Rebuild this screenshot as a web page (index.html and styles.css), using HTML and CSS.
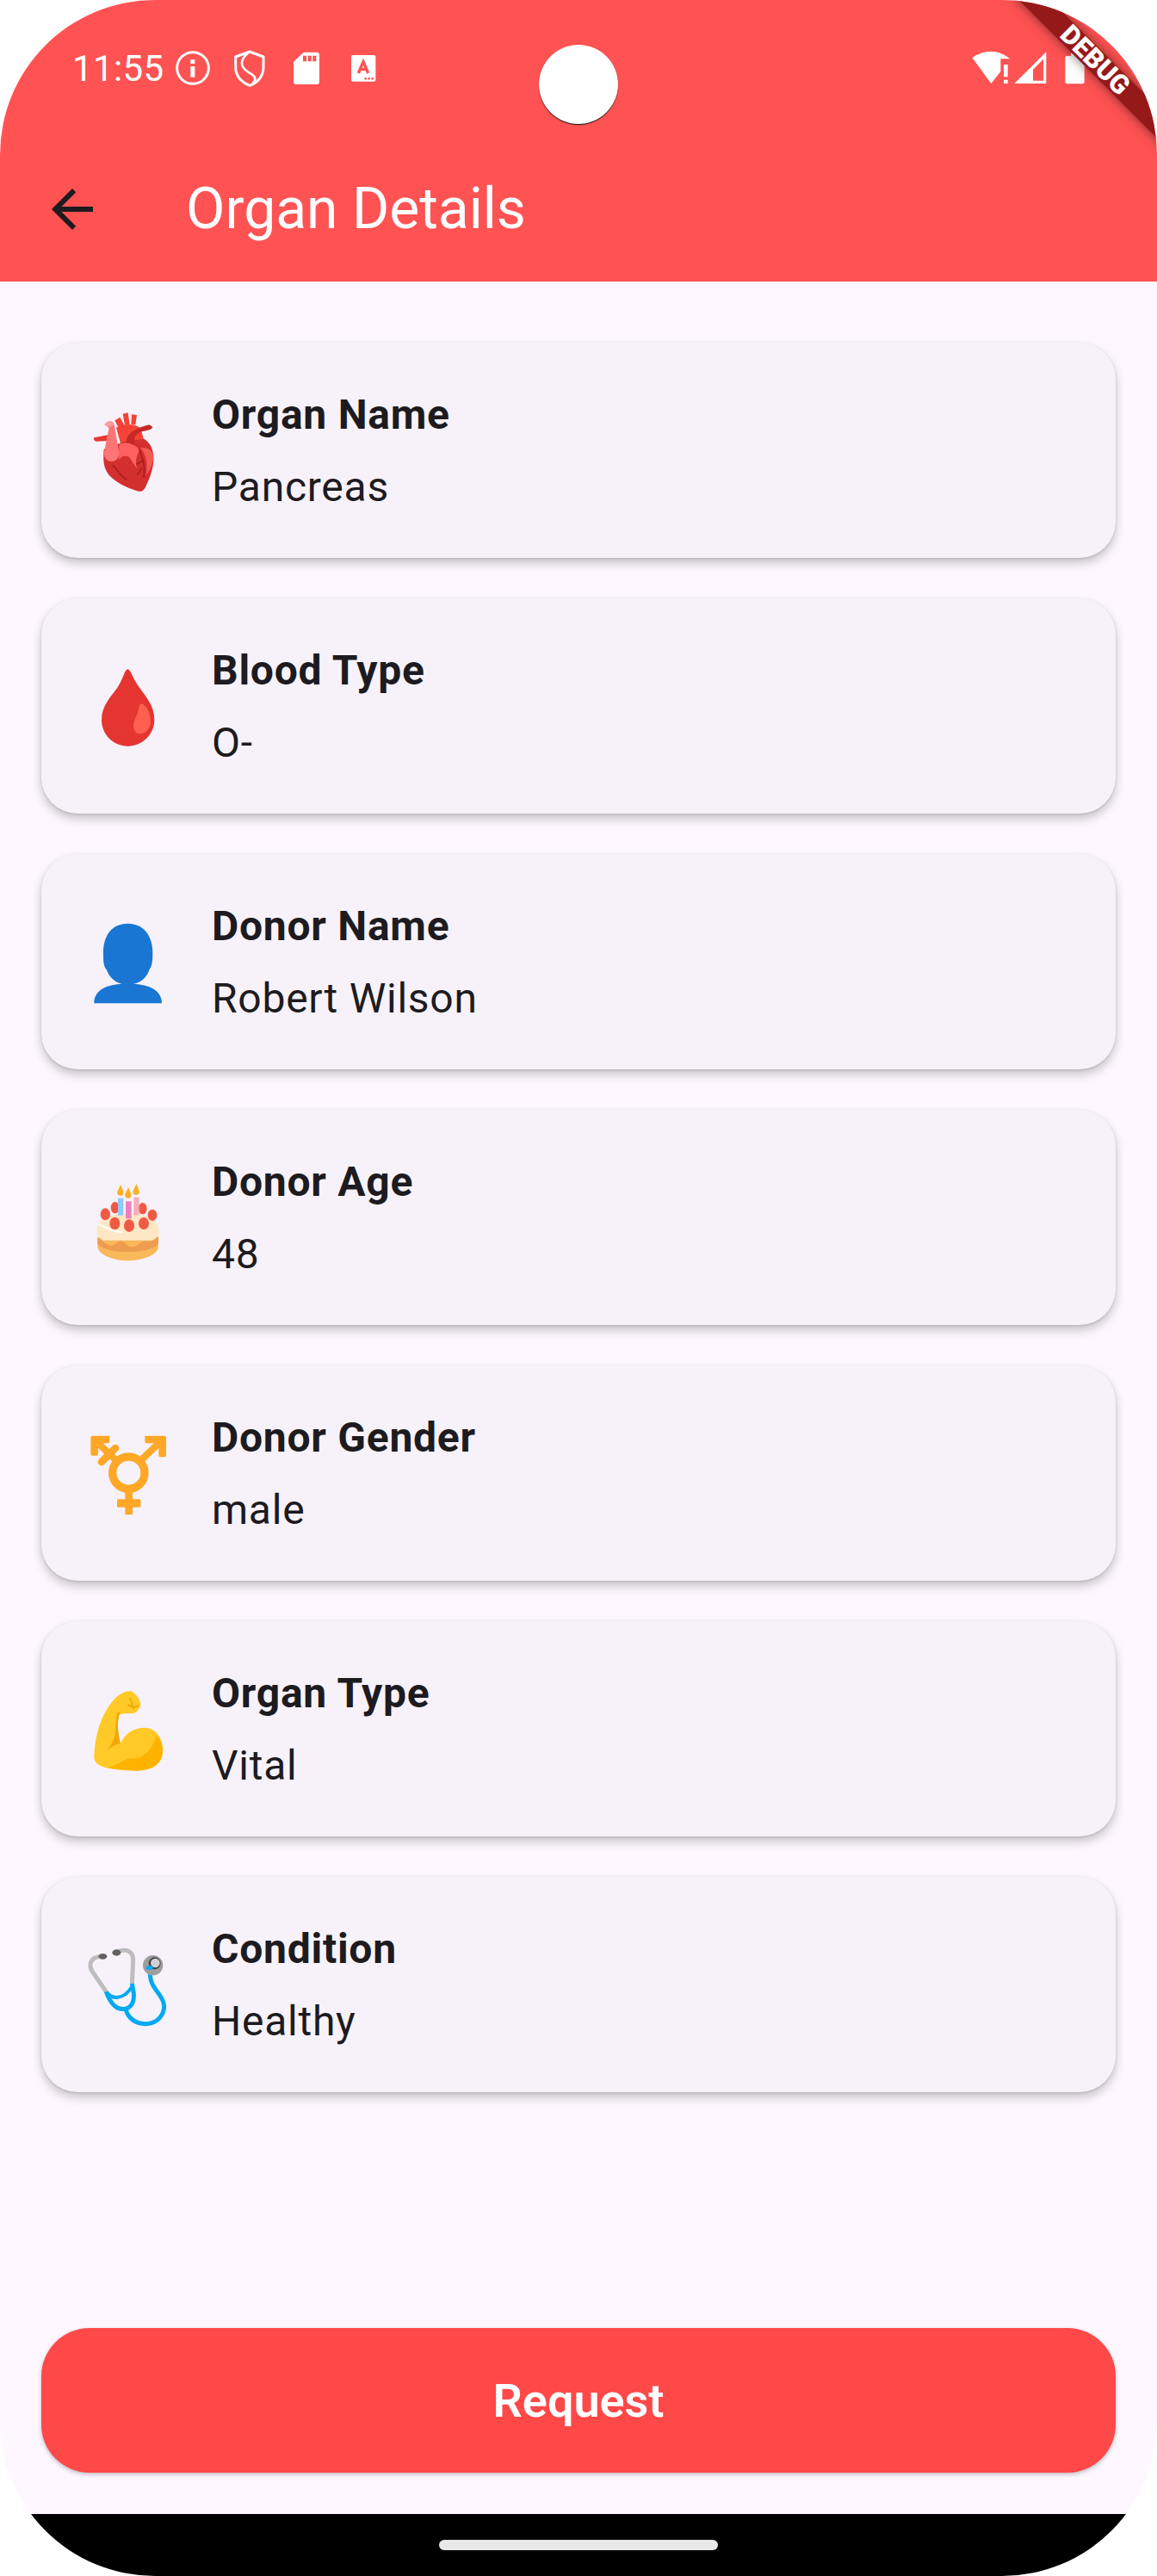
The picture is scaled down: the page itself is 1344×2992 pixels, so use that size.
FILE: index.html
```html
<!DOCTYPE html>
<html lang="en">
<head>
  <meta charset="UTF-8">
  <meta name="viewport" content="width=device-width, initial-scale=1.0">
  <title>Organ Details</title>
  <link rel="stylesheet" href="styles.css">
</head>
<body>
  <div class="screen">
    <header class="appbar">
      <div class="status">
        <span class="time">11:55</span>
        <svg class="st-icon" viewBox="418 46 144 144"><circle cx="490" cy="118" r="55" fill="none" stroke="#fff" stroke-width="9"/><rect x="482" y="112" width="15" height="38" fill="#fff"/><rect x="482" y="88" width="15" height="15" fill="#fff"/></svg>
        <svg class="st-icon" viewBox="615 45 144 144"><path d="M687 60L735 78V115C735 150 710 170 687 178C665 170 638 150 638 115V78Z" fill="none" stroke="#fff" stroke-width="9" stroke-linejoin="round"/><path d="M684 62C650 90 655 112 680 130C700 142 716 150 698 170" fill="none" stroke="#fff" stroke-width="8"/></svg>
        <svg class="st-icon" viewBox="813 46 144 144"><path d="M875 63H920Q930 63 930 73V165Q930 175 920 175H850Q840 175 840 165V96Z" fill="#fff"/><path d="M873 75h12v20h-12zM890 75h12v20h-12zM907 75h12v20h-12z" fill="#ff5252"/></svg>
        <svg class="st-icon" viewBox="1010 46 144 144"><rect x="1040" y="73" width="85" height="92" rx="6" fill="#fff"/><path d="M1065 136L1082 96L1099 136M1072 122H1092" fill="none" stroke="#ff5252" stroke-width="10"/><circle cx="1090" cy="155" r="4" fill="#ff5252"/><circle cx="1102" cy="155" r="4" fill="#ff5252"/><circle cx="1114" cy="155" r="4" fill="#ff5252"/></svg>
        <svg class="st-right" viewBox="540 165 420 135">
          <path d="M556 201C600 170 650 172 688 205H655V250L622 291Z" fill="#fff"/>
          <path d="M666 225h14v43h-14zM666 278h14v13h-14z" fill="#fff"/>
          <path d="M703 291L814 181V291ZM768 281H804V206L768 242Z" fill="#fff" fill-rule="evenodd"/>
          <path d="M900 185H925V195H941Q947 195 947 201V286Q947 292 941 292H886Q880 292 880 286V201Q880 195 886 195H900Z" fill="#fff"/>
        </svg>
      </div>
      <div class="toolbar">
        <svg class="back" viewBox="0 0 24 24"><path d="M20 11H7.83l5.59-5.59L12 4l-8 8 8 8 1.41-1.41L7.83 13H20v-2z" fill="#1d1b20"/></svg>
        <h1 class="page-title">Organ Details</h1>
      </div>
    </header>

    <main class="list">
      <div class="card">
        <svg class="emoji" viewBox="174 249 360 360">
          <path d="M237 385L285 376L290 396L245 398Q236 396 237 385Z" fill="#e53935"/>
          <path d="M310 325L328 314L345 345L325 355ZM338 302L356 298L362 340L345 342ZM369 304L387 306L382 340L367 340Z" fill="#f44336"/>
          <path d="M315 350C340 335 380 335 400 352L410 388L330 405Z" fill="#f44336"/>
          <path d="M272 425C268 470 272 500 300 525C325 548 365 565 395 572C405 574 412 568 418 555C435 520 447 485 445 450C443 420 430 400 410 388L340 400Z" fill="#d32f2f"/>
          <path d="M325 408C350 398 378 405 396 428C388 445 378 465 388 495L360 452C345 445 335 448 325 462Z" fill="#ff6161"/>
          <path d="M400 420C420 418 442 425 444 450C445 475 432 500 420 515C425 480 420 445 400 420Z" fill="#f55a55"/>
          <path d="M350 400C350 370 385 350 430 340L442 348C438 358 425 360 410 362C385 368 372 385 380 412" fill="#c62828"/>
          <path d="M274 340C285 322 305 325 308 340L326 440C326 458 310 468 298 468C285 468 272 455 272 440L290 350Z" fill="#ff7575"/>
          <path d="M276 338C285 325 302 328 306 338C298 348 285 350 276 338Z" fill="#ff9e9e"/>
          <path d="M395 425C405 450 418 480 410 525M410 465L385 478M405 490L388 515M302 480C320 495 325 515 352 532" fill="none" stroke="#a91f1f" stroke-width="5"/>
        </svg>
        <div class="info">
          <div class="label">Organ Name</div>
          <div class="value">Pancreas</div>
        </div>
      </div>

      <div class="card">
        <svg class="emoji" viewBox="174 240 360 360">
          <path d="M355 292C365 292 370 320 395 355C420 390 448 420 448 468C448 520 405 560 356 560C305 560 264 520 264 468C264 420 295 390 320 355C342 320 345 292 355 292Z" fill="#e53530"/>
          <path d="M402 412C415 412 435 440 435 475C435 500 415 517 398 517C382 517 374 500 375 485C378 465 390 450 394 425C396 415 399 412 402 412Z" fill="#ff5f50"/>
        </svg>
        <div class="info">
          <div class="label">Blood Type</div>
          <div class="value">O-</div>
        </div>
      </div>

      <div class="card">
        <svg class="emoji" viewBox="174 171 360 360">
          <path d="M355 218C410 218 442 260 442 320C442 350 440 365 430 380C420 410 395 425 375 428C420 430 474 445 474 496H238C238 445 290 430 335 428C315 425 290 405 282 380C270 365 270 350 270 320C270 260 300 218 355 218Z" fill="#1976d2"/>
        </svg>
        <div class="info">
          <div class="label">Donor Name</div>
          <div class="value">Robert Wilson</div>
        </div>
      </div>

      <div class="card">
        <svg class="emoji" viewBox="24 12 360 360">
          <path d="M100 262V295C105 325 160 343 205 343C250 343 310 325 312 295V262Z" fill="#f9b85a"/>
          <path d="M97 240C97 200 130 180 205 180C280 180 314 200 314 240L312 272L100 272Z" fill="#fde7c4"/>
          <path d="M100 262C115 262 125 290 145 290C165 290 170 272 185 275C200 280 205 298 225 295C245 290 250 272 270 275C290 280 300 265 312 258V285C290 305 250 312 205 312C160 312 120 305 100 285Z" fill="#ee9c4f"/>
          <path d="M104 215C125 228 150 240 185 244" fill="none" stroke="#fff" stroke-width="6" stroke-linecap="round"/>
          <g fill="#ef5a45">
            <ellipse cx="127" cy="181" rx="17" ry="21"/><ellipse cx="161" cy="158" rx="15" ry="20"/><ellipse cx="257" cy="161" rx="15" ry="20"/><ellipse cx="291" cy="184" rx="16" ry="20"/><ellipse cx="160" cy="213" rx="18" ry="22"/><ellipse cx="210" cy="221" rx="18" ry="22"/><ellipse cx="261" cy="213" rx="18" ry="21"/>
          </g>
          <rect x="171" y="125" width="19" height="60" fill="#90caf9"/>
          <rect x="198" y="136" width="20" height="60" fill="#ee7fbf"/>
          <rect x="226" y="122" width="19" height="62" fill="#f8aeb8"/>
          <path d="M180 78C186 92 192 102 190 110C188 118 172 118 169 110C167 100 175 92 180 78ZM207 87C213 101 219 111 217 119C215 127 199 127 196 119C194 109 202 101 207 87ZM235 75C241 89 247 99 245 107C243 115 227 115 224 107C222 97 230 89 235 75Z" fill="#fbb024"/>
        </svg>
        <div class="info">
          <div class="label">Donor Age</div>
          <div class="value">48</div>
        </div>
      </div>

      <div class="card">
        <svg class="emoji" viewBox="174 153 360 360">
          <g fill="#ffa726">
            <path d="M415 203H483Q489 203 489 209V271Q489 277 483 277H469Q463 277 463 271V229H421Q415 229 415 223Z"/>
            <path d="M226 209Q226 203 232 203H292V223Q292 229 286 229H252V266Q252 272 246 272H232Q226 272 226 266Z"/>
            <rect x="346" y="400" width="26" height="78" rx="4"/>
            <rect x="318" y="424" width="82" height="28" rx="4"/>
          </g>
          <g fill="none" stroke="#ffa726">
            <path d="M400 290L472 220" stroke-width="24"/>
            <path d="M312 286L243 220" stroke-width="24"/>
            <path d="M264 294L312 246" stroke-width="26" stroke-linecap="round"/>
            <circle cx="358" cy="332" r="56" stroke-width="28"/>
          </g>
        </svg>
        <div class="info">
          <div class="label">Donor Gender</div>
          <div class="value">male</div>
        </div>
      </div>

      <div class="card">
        <svg class="emoji" viewBox="24 -6 360 360">
          <path d="M88 270C90 200 110 130 150 80C170 55 195 42 215 42C235 50 250 75 250 90C245 105 240 115 225 120C205 122 190 118 175 125C168 150 170 190 180 225C195 190 225 170 265 170C305 172 327 205 327 250C327 290 300 318 240 320C190 320 130 315 105 300C95 295 88 285 88 270Z" fill="#ffca28"/>
          <path d="M210 276C250 284 290 255 303 198C320 210 327 230 327 250C327 290 300 318 240 320C205 320 170 316 135 310C165 300 190 285 210 276Z" fill="#ffb300"/>
          <path d="M132 250C150 225 165 205 163 165C162 150 165 130 172 115C182 120 178 122 175 126C168 150 170 190 180 225C165 228 150 235 132 250Z" fill="#f2a600"/>
          <path d="M205 90C220 100 235 98 245 92M212 65C220 75 218 90 225 105" fill="none" stroke="#f2a600" stroke-width="5"/>
        </svg>
        <div class="info">
          <div class="label">Organ Type</div>
          <div class="value">Vital</div>
        </div>
      </div>

      <div class="card">
        <svg class="emoji" viewBox="174 135 360 360">
          <g fill="none" stroke-width="15">
            <path d="M280 340L232 270C218 248 224 222 255 218" stroke="#bdbdbd"/>
            <path d="M370 315L374 230C374 198 352 190 322 200" stroke="#bdbdbd"/>
            <path d="M280 340C295 385 320 405 345 400C370 395 378 375 376 345L370 312" stroke="#03a9f4"/>
            <path d="M282 342C300 368 342 368 368 325" stroke="#03a9f4" stroke-width="12"/>
            <path d="M348 402C360 440 390 452 420 452C460 450 482 420 482 390C480 345 425 330 434 262" stroke="#03a9f4"/>
          </g>
          <ellipse cx="268" cy="217" rx="15" ry="10" fill="#616161"/>
          <ellipse cx="316" cy="204" rx="15" ry="11" fill="#616161"/>
          <circle cx="443" cy="248" r="35" fill="#9e9e9e"/>
          <circle cx="449" cy="241" r="21" fill="#424242"/>
          <circle cx="451" cy="240" r="16" fill="#d0d0d0"/>
          <path d="M424 262C425 256 430 254 442 258" fill="none" stroke="#03a9f4" stroke-width="14"/>
        </svg>
        <div class="info">
          <div class="label">Condition</div>
          <div class="value">Healthy</div>
        </div>
      </div>
    </main>

    <div class="actions">
      <button class="request">Request</button>
    </div>

    <div class="navbar"><span class="home"></span></div>

    <!-- stuff sitting over the app -->
    <div class="camera"></div>
    <div class="ribbon">DEBUG</div>
  </div>
</body>
</html>
```

FILE: styles.css
```css
* {
  padding: 0;
  margin: 0;
  box-sizing: border-box;
}
html, body {
  background-color: #fff;
}
body {
  font-family: Roboto, "Liberation Sans", sans-serif;
  color: #1d1b20;
}
.screen {
  width: 1344px;
  height: 2992px;
  background-color: #fef7ff;
  border-radius: 180px;
  overflow: hidden;
  position: relative;
  display: flex;
  flex-direction: column;
}

/* app bar */
.appbar {
  background-color: #ff5252;
  height: 327px;
  flex-shrink: 0;
}
.status {
  height: 158px;
  padding: 0 80px 0 84px;
  display: flex;
  align-items: center;
  gap: 18px;
}
.time {
  color: #fff;
  font-size: 42px;
  letter-spacing: .4px;
  margin-right: -9px;
}
.st-icon {
  width: 48px;
  height: 48px;
}
.st-right {
  width: 140px;
  height: 45px;
  margin-left: auto;
  margin-top: -3px;
}
.toolbar {
  height: 169px;
  padding-left: 48px;
  display: flex;
  align-items: center;
  gap: 96px;
}
.back {
  width: 72px;
  height: 72px;
}
.page-title {
  color: #fff;
  font-size: 66px;
  font-weight: 400;
}

/* cards */
.list {
  flex: 1;
  padding: 71px 48px 0;
  display: flex;
  flex-direction: column;
  gap: 47px;
}
.card {
  height: 250px;
  padding: 0 40px;
  background-color: #f7f2fa;
  border-radius: 42px;
  box-shadow: 0 6px 12px rgba(0, 0, 0, .22), 0 1px 3px rgba(0, 0, 0, .12);
  display: flex;
  align-items: center;
  gap: 38px;
}
.emoji {
  width: 120px;
  height: 120px;
  flex-shrink: 0;
}
.info {
  padding-top: 2px;
  letter-spacing: .75px;
}
.label {
  font-size: 48px;
  font-weight: 700;
  line-height: 72px;
  margin-bottom: 12px;
}
.value {
  font-size: 48px;
  line-height: 72px;
}

/* bottom */
.actions {
  padding: 0 48px 48px;
}
.request {
  display: block;
  width: 100%;
  height: 168px;
  border: none;
  border-radius: 56px;
  background-color: #ff4848;
  color: #fff;
  font-family: inherit;
  font-size: 54px;
  font-weight: 600;
  box-shadow: 0 2px 5px rgba(0, 0, 0, .25);
}
.navbar {
  height: 72px;
  flex-shrink: 0;
  background-color: #000;
  padding-top: 30px;
  display: flex;
  justify-content: center;
}
.home {
  width: 324px;
  height: 12px;
  border-radius: 6px;
  background-color: #e8e8e8;
}

/* overlays */
.camera {
  position: absolute;
  left: 626px;
  top: 52px;
  width: 92px;
  height: 92px;
  border-radius: 50%;
  background-color: #fff;
  box-shadow: 0 1px 1px #111;
}
.ribbon {
  position: absolute;
  left: 1072px;
  top: 57px;
  width: 400px;
  height: 26px;
  background-color: #961919;
  box-shadow: 0 0 14px rgba(0, 0, 0, .5);
  color: #fff;
  font-size: 31px;
  font-weight: 900;
  line-height: 26px;
  text-align: center;
  transform: rotate(45deg);
}
```
